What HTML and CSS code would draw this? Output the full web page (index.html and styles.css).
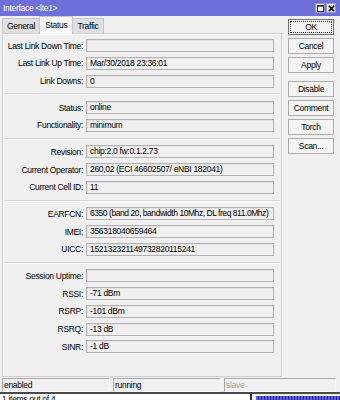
FILE: index.html
```html
<!DOCTYPE html>
<html>
<head>
<meta charset="utf-8">
<link rel="stylesheet" href="styles.css">
</head>
<body>
<div class="window">
  <div class="titlebar">
    <span class="title">Interface &lt;lte1&gt;</span>
    <div class="tbtns">
      <span class="tbtn"><svg width="8" height="8" viewBox="0 0 8 8"><rect x="0.5" y="0.5" width="7" height="7" fill="#fff" stroke="#222" stroke-width="1"/><rect x="0.5" y="0.5" width="7" height="1.5" fill="#222"/></svg></span>
      <span class="tbtn"><svg width="8" height="8" viewBox="0 0 8 8"><path d="M1 1L7 7M7 1L1 7" stroke="#111" stroke-width="1.8"/></svg></span>
    </div>
  </div>
  <div class="content">
    <div class="main">
      <div class="tabs">
        <span class="tab">General</span>
        <span class="tab active">Status</span>
        <span class="tab">Traffic</span>
      </div>
      <div class="panel">
        <div class="row"><span class="lbl">Last Link Down Time:</span><span class="field"></span></div>
        <div class="row"><span class="lbl">Last Link Up Time:</span><span class="field">Mar/30/2018 23:36:01</span></div>
        <div class="row"><span class="lbl">Link Downs:</span><span class="field">0</span></div>
        <div class="sep"></div>
        <div class="row"><span class="lbl">Status:</span><span class="field">online</span></div>
        <div class="row"><span class="lbl">Functionality:</span><span class="field">minimum</span></div>
        <div class="sep"></div>
        <div class="row"><span class="lbl">Revision:</span><span class="field">chip:2.0 fw:0.1.2.73</span></div>
        <div class="row"><span class="lbl">Current Operator:</span><span class="field">260,02 (ECI 46602507/ eNBI 182041)</span></div>
        <div class="row"><span class="lbl">Current Cell ID:</span><span class="field">11</span></div>
        <div class="sep"></div>
        <div class="row"><span class="lbl">EARFCN:</span><span class="field tight">6350 (band 20, bandwidth 10Mhz, DL freq 811.0Mhz)</span></div>
        <div class="row"><span class="lbl">IMEI:</span><span class="field">356318040659464</span></div>
        <div class="row"><span class="lbl">UICC:</span><span class="field">152132321149732820115241</span></div>
        <div class="sep"></div>
        <div class="row"><span class="lbl">Session Uptime:</span><span class="field"></span></div>
        <div class="row"><span class="lbl">RSSI:</span><span class="field">-71 dBm</span></div>
        <div class="row"><span class="lbl">RSRP:</span><span class="field">-101 dBm</span></div>
        <div class="row"><span class="lbl">RSRQ:</span><span class="field">-13 dB</span></div>
        <div class="row"><span class="lbl">SINR:</span><span class="field">-1 dB</span></div>
      </div>
    </div>
    <div class="buttons">
      <span class="btn ok">OK</span>
      <span class="btn">Cancel</span>
      <span class="btn">Apply</span>
      <span class="btn gap">Disable</span>
      <span class="btn">Comment</span>
      <span class="btn">Torch</span>
      <span class="btn">Scan...</span>
    </div>
  </div>
  <div class="statusbar">
    <span class="sbox">enabled</span>
    <span class="sbox">running</span>
    <span class="sbox dim">slave</span>
  </div>
</div>
<div class="behind">
  <span class="bleft">1 items out of 4</span>
  <span class="bright"></span>
</div>
</body>
</html>
```
FILE: styles.css
```css
html, body {
  margin: 0;
  padding: 0;
}
body {
  width: 340px;
  height: 400px;
  overflow: hidden;
  background: #f0f0f0;
  font-family: "Liberation Sans", Arial, sans-serif;
  font-size: 8.5px;
  letter-spacing: -0.3px;
  color: #000;
}
.window {
  height: 392px;
  display: flex;
  flex-direction: column;
  background: #f0f0f0;
}
.titlebar {
  height: 16px;
  background: #6f6fda;
  display: flex;
  align-items: center;
  justify-content: space-between;
  padding: 0 4px 0 3px;
}
.title {
  color: #fff;
  font-size: 8.5px;
}
.tbtns {
  display: flex;
  gap: 1px;
}
.tbtn {
  width: 10px;
  height: 10px;
  background: #e8e8f0;
  border: 1px solid #9a9ad0;
  box-sizing: border-box;
  display: flex;
  align-items: center;
  justify-content: center;
}
.tbtn svg {
  width: 7px;
  height: 7px;
}
.content {
  display: flex;
  height: 361px;
}
.main {
  margin-left: 2px;
  width: 280px;
  display: flex;
  flex-direction: column;
}
.tabs {
  height: 17px;
  display: flex;
  align-items: flex-end;
}
.tab {
  height: 15px;
  box-sizing: border-box;
  border: 1px solid #c8c8c8;
  border-bottom: none;
  background: #e0e0e0;
  padding: 0 4px;
  display: flex;
  align-items: center;
}
.tab.active {
  height: 18px;
  background: #f9f9f9;
  margin-bottom: -1px;
  position: relative;
  z-index: 1;
  padding: 3px 5px 0;
  margin-left: -1px;
  margin-right: -1px;
  align-items: flex-start;
}
.panel {
  flex: 1;
  border: 1px solid #cfcfcf;
  background: #f0f0f0;
  box-shadow: inset 1px 1px 0 #fff;
  padding-top: 5px;
  display: flex;
  flex-direction: column;
  gap: 4.75px;
}
.row {
  display: grid;
  grid-template-columns: 80px 188px;
  column-gap: 3px;
  align-items: center;
  height: 13px;
}
.lbl {
  text-align: right;
  white-space: nowrap;
}
.field {
  height: 13px;
  box-sizing: border-box;
  border: 1px solid #b2b2b2;
  background: #f0f0f0;
  box-shadow: inset 1px 1px 0 #e2e2e2;
  padding: 0 2px 0 3px;
  line-height: 11px;
  white-space: nowrap;
  overflow: hidden;
}
.field.tight {
  letter-spacing: -0.45px;
}
.sep {
  height: 0;
  border-top: 1px solid #d6d6d6;
  border-bottom: 1px solid #fbfbfb;
  margin: 1px 1px;
}
.buttons {
  margin-left: 6px;
  padding-top: 3px;
  display: flex;
  flex-direction: column;
  gap: 3px;
  width: 46px;
}
.btn {
  height: 16px;
  box-sizing: border-box;
  border: 1px solid #adadad;
  background: #f4f4f4;
  display: flex;
  align-items: center;
  justify-content: center;
}
.btn.ok {
  border-color: #707070;
  outline: 1px dotted #333;
  outline-offset: -3px;
}
.btn.gap {
  margin-top: 5px;
}
.statusbar {
  margin-top: 1px;
  height: 14px;
  display: flex;
  gap: 3px;
  padding-left: 2px;
}
.sbox {
  width: 108px;
  box-sizing: border-box;
  border-top: 1px solid #a8a8a8;
  border-left: 1px solid #a8a8a8;
  border-bottom: 1px solid #fff;
  border-right: 1px solid #fff;
  padding-left: 1px;
  line-height: 12px;
}
.sbox:last-child {
  width: 112px;
}
.sbox.dim {
  color: #a6a6a6;
}
.behind {
  height: 8px;
  display: flex;
  border-top: 2px solid #4a4a4a;
}
.bleft {
  width: 248px;
  background: #fff;
  padding-left: 2px;
  line-height: 10px;
  overflow: hidden;
  border-right: 2px solid #333;
}
.bright {
  flex: 1;
  margin-left: 4px;
  margin-top: 2px;
  background: repeating-linear-gradient(90deg, #6262d8 0 2px, #20209a 2px 3px);
}
```
